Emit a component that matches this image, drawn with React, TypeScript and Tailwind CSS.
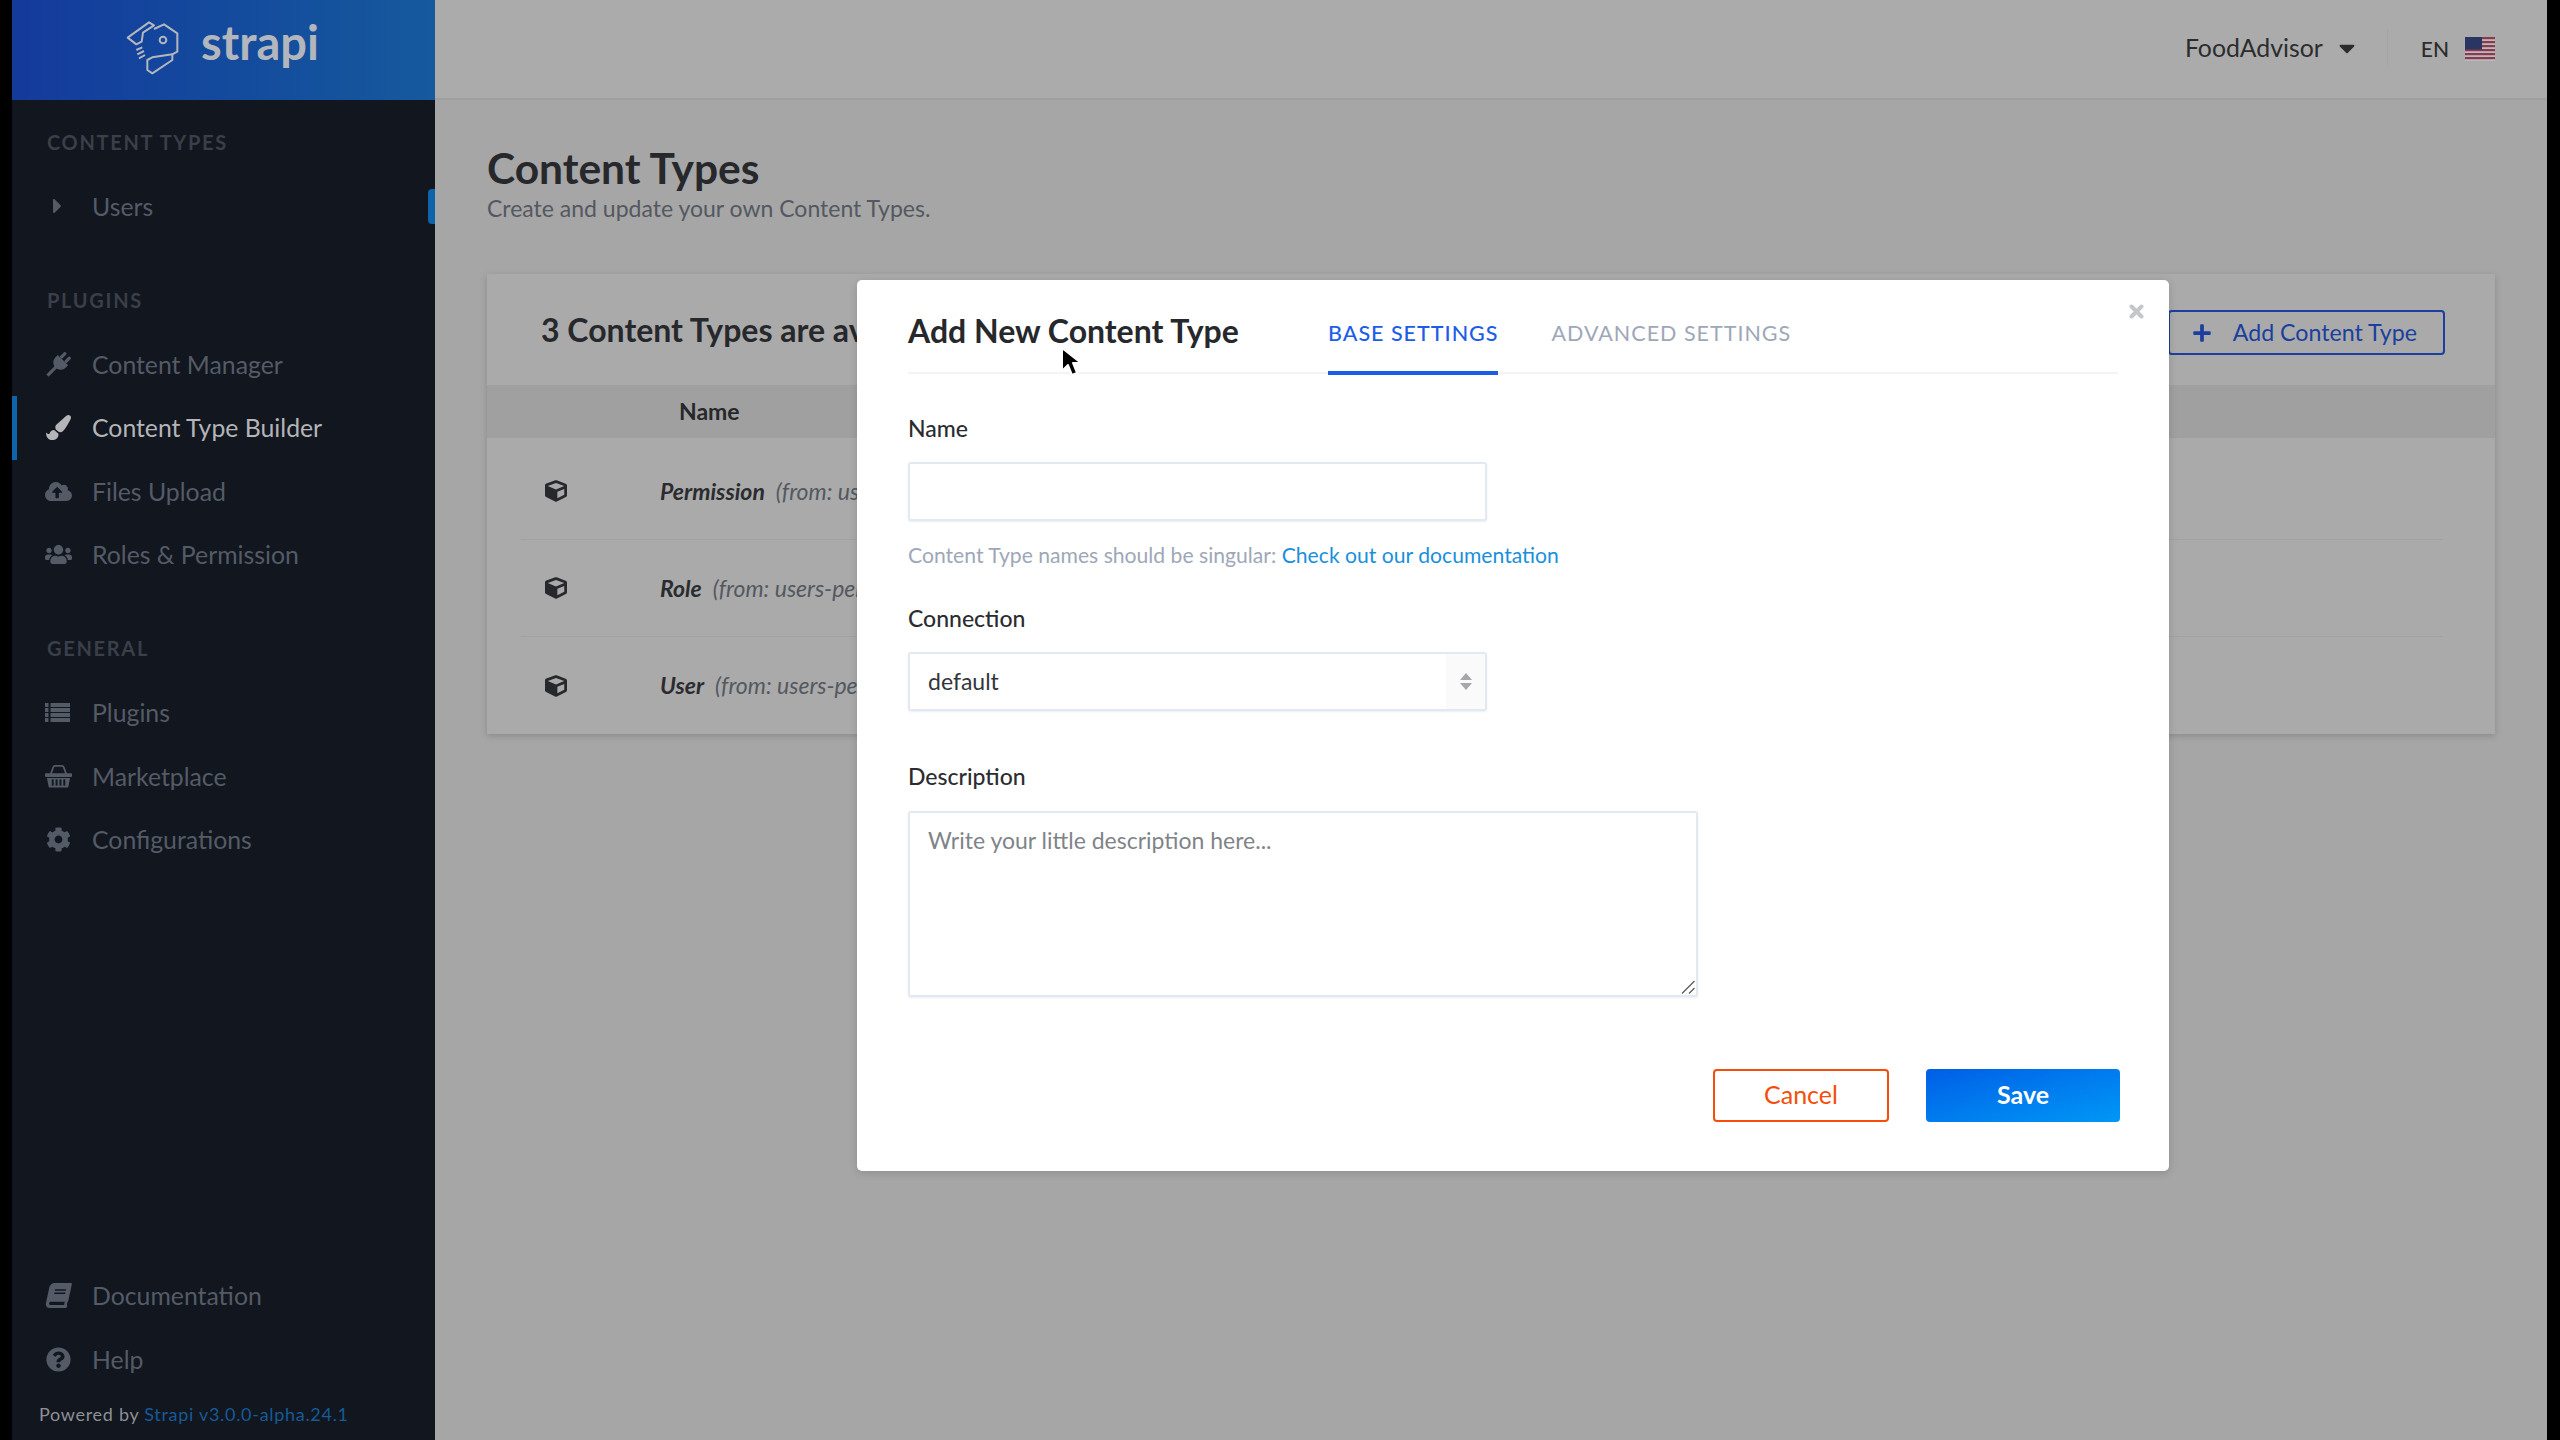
import {
  FaBook,
  FaCaretDown,
  FaCaretRight,
  FaCloudUploadAlt,
  FaCog,
  FaCube,
  FaPaintBrush,
  FaPlus,
  FaQuestionCircle,
  FaUsers,
} from "react-icons/fa";

type IconProps = { className?: string };
type Icon = (props: IconProps) => React.ReactNode;

const font = { fontFamily: "Lato, 'Noto Sans', sans-serif" };

// old font-awesome glyphs that the package no longer has in this shape
function PlugIcon({ className }: IconProps) {
  return (
    <svg className={className} viewBox="0 0 24 24" fill="currentColor">
      <g transform="rotate(45 12 12)">
        <rect x="7.5" y="-1" width="3" height="7" rx="1" />
        <rect x="13.5" y="-1" width="3" height="7" rx="1" />
        <path d="M5 6h14v3c0 4-3 7-7 7s-7-3-7-7z" />
        <rect x="10.5" y="15" width="3" height="12" />
      </g>
    </svg>
  );
}

function ListIcon({ className }: IconProps) {
  return (
    <svg className={className} viewBox="0 0 27 25" fill="currentColor">
      {[3, 8, 13, 18].map((y) => (
        <g key={y}>
          <rect x="0" y={y} width="3.5" height="4" />
          <rect x="5.5" y={y} width="19.5" height="4" />
        </g>
      ))}
    </svg>
  );
}

function BasketIcon({ className }: IconProps) {
  return (
    <svg className={className} viewBox="0 0 28 25" fill="currentColor">
      <path d="M6 10l2.5-7q.6-1.5 2-1.5h7q1.400 0 2 1.500L22 10" fill="none" stroke="currentColor" strokeWidth="1.800" />
      <rect x="0" y="9" width="28" height="4" rx="1" />
      <path d="M2 14h24l-1.800 9q-.2 1-1.200 1H5q-1 0-1.200-1z" />
      <g fill="#11161f">
        <rect x="7" y="15.500" width="2" height="6.500" />
        <rect x="11" y="15.500" width="2" height="6.500" />
        <rect x="15" y="15.500" width="2" height="6.500" />
        <rect x="19" y="15.500" width="2" height="6.500" />
      </g>
    </svg>
  );
}

function SlantBook({ className }: IconProps) {
  return <FaBook className={`${className} -skew-x-12`} />;
}

const plugins: { label: string; icon: Icon; active?: boolean }[] = [
  { label: "Content Manager", icon: PlugIcon },
  { label: "Content Type Builder", icon: FaPaintBrush, active: true },
  { label: "Files Upload", icon: FaCloudUploadAlt },
  { label: "Roles & Permission", icon: FaUsers },
];

const general: { label: string; icon: Icon }[] = [
  { label: "Plugins", icon: ListIcon },
  { label: "Marketplace", icon: BasketIcon },
  { label: "Configurations", icon: FaCog },
];

const footerLinks: { label: string; icon: Icon }[] = [
  { label: "Documentation", icon: SlantBook },
  { label: "Help", icon: FaQuestionCircle },
];

const rows = [
  { name: "Permission", from: "users-permissions" },
  { name: "Role", from: "users-permissions" },
  { name: "User", from: "users-permissions" },
];

function StrapiLogo() {
  return (
    <svg width="70" height="65" viewBox="0 0 210 195" fill="none" stroke="#b3b6bd" strokeWidth="6" strokeLinejoin="round">
      <path d="M26 68 90 22l15 9-33 22-4 27-16 8z" />
      <path d="M105 42l30-14 40 27v55l-15 8" />
      <path d="M85 135l15-8 60-9v17l-60 40-15-10z" />
      <circle cx="132" cy="75" r="10" />
      <path d="M52 105l18-8M55 118l20-10M60 130l18-10" />
    </svg>
  );
}

function UsFlag() {
  return (
    <svg width="30" height="24" viewBox="0 0 30 24">
      <rect width="30" height="24" fill="#b9b9bd" />
      {[0, 4, 8, 12, 16, 20].map((y) => (
        <rect key={y} y={y} width="30" height="2.2" fill="#8b3a4b" />
      ))}
      <rect width="17" height="12.5" fill="#2a3563" />
    </svg>
  );
}

function NavItem({ label, icon: Icon, active }: { label: string; icon: Icon; active?: boolean }) {
  return (
    <div
      className={`flex h-[63.5px] items-center border-l-[5px] pl-[28px] text-[24.8px] ${
        active ? "border-[#0e63ab] text-[#b4b5b8]" : "border-transparent text-[#555b66]"
      }`}
    >
      <span className="flex w-[47px] shrink-0">
        <Icon className={`h-[25px] w-[27px] ${active ? "text-[#b4b5b8]" : "text-[#555b66]"}`} />
      </span>
      {label}
    </div>
  );
}

function SectionLabel({ children }: { children: string }) {
  return <div className="pl-[35px] text-[20px] font-bold leading-none tracking-[1.7px] text-[#3a3f49]">{children}</div>;
}

function Sidebar() {
  return (
    <aside className="flex h-full w-[423px] shrink-0 flex-col bg-[#11161f]">
      <div className="flex h-[100px] shrink-0 items-center justify-center gap-[12px] bg-gradient-to-r from-[#143a9c] to-[#16599d] pb-[6px] pr-[9px]">
        <StrapiLogo />
        <span className="pb-[9px] text-[47px] font-bold leading-none text-[#b3b6bd]">strapi</span>
      </div>
      <div className="pt-[32px]">
        <SectionLabel>CONTENT TYPES</SectionLabel>
      </div>
      <div className="relative mt-[22.5px] flex h-[63.5px] items-center pl-[41px] text-[24.8px] text-[#555b66]">
        <FaCaretRight className="h-[24px] w-[9px] text-[#555b66]" />
        <span className="ml-[30px]">Users</span>
        <span className="absolute right-0 top-[14px] h-[35px] w-[7px] rounded-l-[4px] bg-[#0e63ab]" />
      </div>
      <div className="mt-[52px]">
        <SectionLabel>PLUGINS</SectionLabel>
      </div>
      <div className="mt-[22.5px]">
        {plugins.map((p) => (
          <NavItem key={p.label} {...p} />
        ))}
      </div>
      <div className="mt-[51.5px]">
        <SectionLabel>GENERAL</SectionLabel>
      </div>
      <div className="mt-[23px]">
        {general.map((g) => (
          <NavItem key={g.label} {...g} />
        ))}
      </div>
      <div className="mt-auto">
        {footerLinks.map((f) => (
          <NavItem key={f.label} {...f} />
        ))}
      </div>
      <div className="h-[49px] pl-[27px] pt-[11px] text-[18px] leading-[24px] tracking-[0.7px] text-[#8e9094]">
        Powered by <span className="text-[#175a96]">Strapi v3.0.0-alpha.24.1</span>
      </div>
    </aside>
  );
}

function Topbar() {
  return (
    <header className="flex h-[100px] shrink-0 items-center justify-end border-b-2 border-[#9f9f9f] bg-[#ababab] pb-[3px] pr-[52px]">
      <span className="text-[24.8px] text-[#2b2c2e]">FoodAdvisor</span>
      <FaCaretDown className="ml-[16px] h-[26px] w-[16px] text-[#2b2c2e]" />
      <span className="ml-[32px] h-[35px] w-px bg-[#a3a3a3]" />
      <span className="ml-[33px] mt-[3px] text-[21px] font-medium text-[#2b2c2e]">EN</span>
      <span className="ml-[16px] mt-[3px] flex">
        <UsFlag />
      </span>
    </header>
  );
}

function ContentPage() {
  return (
    <main className="flex min-w-0 flex-1 flex-col overflow-hidden bg-[#a6a6a6]">
      <Topbar />
      <div className="pl-[52px] pr-[52px] pt-[43px]">
        <h1 className="text-[42.5px] font-bold leading-[50px] text-[#26282c]">Content Types</h1>
        <p className="text-[23px] leading-[30px] text-[#545860]">Create and update your own Content Types.</p>
        <section className="mt-[51px] bg-[#aaaaaa] shadow-[0_2px_6px_rgba(60,60,80,0.25)]">
          <div className="flex h-[111px] items-center justify-between pl-[54px] pr-[50px]">
            <h2 className="text-[32px] font-bold text-[#26282c]">3 Content Types are available</h2>
            <button className="mt-[6px] flex h-[45px] items-center rounded-[4px] border-2 border-[#1a3f9e] pl-[22px] pr-[26px] text-[23.2px] text-[#1a3f9e]">
              <FaPlus className="mr-[21px] h-[20px] w-[20px]" />
              Add Content Type
            </button>
          </div>
          <div className="flex h-[53px] items-center bg-[#a0a0a0] pl-[192px] text-[23px] font-bold text-[#26282c]">Name</div>
          <div className="pt-[5px]">
            {rows.map((r) => (
              <div key={r.name} className="ml-[34px] mr-[52px] flex h-[97px] items-center border-b border-[#a1a1a1] last:border-b-0">
                <FaCube className="ml-[24px] h-[22px] w-[22px] text-[#26282c]" />
                <span className="ml-[93px] text-[23px] font-bold italic text-[#2b2c30]">{r.name}</span>
                <span className="ml-[11px] text-[23px] italic text-[#545860]">(from: {r.from})</span>
              </div>
            ))}
          </div>
        </section>
      </div>
    </main>
  );
}

function Field({ label, children }: { label: string; children: React.ReactNode }) {
  return (
    <div>
      <label className="block text-[23px] font-medium leading-[30px] text-[#2b2c30]">{label}</label>
      {children}
    </div>
  );
}

const inputClass =
  "block rounded-[3px] border-2 border-[#e3e9f3] bg-white text-[23px] text-[#33363b] shadow-[0_1px_2px_rgba(200,210,230,0.4)] outline-none";

function Modal() {
  return (
    <div
      className="absolute left-[857px] top-[280px] flex h-[891px] w-[1312px] flex-col rounded-[5px] bg-white pl-[51px] pr-[51px] shadow-[0_2px_8px_rgba(0,0,0,0.15)]"
      style={font}
    >
      <button className="absolute right-[25px] top-[24px] text-[#c4c6c9]">
        <svg className="h-[15px] w-[15px]" viewBox="0 0 15 15" stroke="currentColor" strokeWidth="4" strokeLinecap="round">
          <path d="M2.500 2.500l10 10M12.500 2.500l-10 10" />
        </svg>
      </button>
      <div className="flex h-[94px] shrink-0 items-stretch border-b-2 border-[#f3f4f5]">
        <h2 className="flex w-[420px] items-center pt-[10px] text-[32px] font-bold text-[#26282c]">Add New Content Type</h2>
        <div className="-mb-[3px] flex items-center border-b-[4px] border-[#1c5de7] pt-[15px] text-[21.5px] font-medium tracking-[1px] text-[#1c5de7]">
          BASE SETTINGS
        </div>
        <div className="ml-[53px] flex items-center pt-[15px] text-[21.5px] tracking-[1px] text-[#9ea7b8]">ADVANCED SETTINGS</div>
      </div>
      <div className="pt-[39px]">
        <Field label="Name">
          <input className={`${inputClass} mt-[19px] h-[59px] w-[579px] px-[18px]`} />
        </Field>
        <p className="mt-[19px] text-[21.15px] leading-[30px] text-[#9ea7b8]">
          Content Type names should be singular: <span className="text-[#1a8fdc]">Check out our documentation</span>
        </p>
        <div className="mt-[32.5px]">
          <Field label="Connection">
            <div className="relative mt-[19px] w-[579px]">
              <select className={`${inputClass} h-[59px] w-full appearance-none px-[18px]`} defaultValue="default">
                <option value="default">default</option>
              </select>
              <div className="absolute bottom-[2px] right-[2px] top-[2px] flex w-[39px] flex-col items-center justify-center gap-[3px] bg-[#fafafb]">
                <span className="h-0 w-0 border-x-[6px] border-b-[7px] border-x-transparent border-b-[#a5a7aa]" />
                <span className="h-0 w-0 border-x-[6px] border-t-[7px] border-x-transparent border-t-[#a5a7aa]" />
              </div>
            </div>
          </Field>
        </div>
        <div className="mt-[50px]">
          <Field label="Description">
            <div className="relative mt-[20px] w-[790px]">
              <textarea
                className={`${inputClass} h-[186px] w-full resize-none px-[18px] pt-[10px] placeholder:text-[#7f8489]`}
                placeholder="Write your little description here..."
              />
              <svg className="absolute bottom-[3px] right-[3px]" width="14" height="14" viewBox="0 0 14 14" stroke="#55585c" strokeWidth="1.2">
                <path d="M1 13.500 13.500 1M8 13.500l5.500-5.500" />
              </svg>
            </div>
          </Field>
        </div>
      </div>
      <div className="mt-[72px] flex justify-end gap-[37px]">
        <button className="h-[53px] w-[176px] rounded-[4px] border-2 border-[#f64d0a] text-[25px] text-[#f64d0a]">Cancel</button>
        <button className="mr-[-2px] h-[53px] w-[194px] rounded-[4px] bg-gradient-to-br from-[#005ee6] to-[#0097f6] text-[25px] font-bold text-white">
          Save
        </button>
      </div>
    </div>
  );
}

function Cursor() {
  return (
    <svg className="absolute left-[1059px] top-[346px]" width="24" height="32" viewBox="0 0 24 32">
      <path d="M3 2v23l6-6 4 10 5-2-4-10h8z" fill="#000" stroke="#fff" strokeWidth="2" strokeLinejoin="round" />
    </svg>
  );
}

export default function App() {
  return (
    <div className="relative flex h-[1440px] w-[2560px] overflow-hidden bg-black" style={font}>
      <div className="w-[12px] shrink-0 bg-black" />
      <Sidebar />
      <ContentPage />
      <div className="w-[13px] shrink-0 bg-black" />
      <Modal />
      <Cursor />
    </div>
  );
}
